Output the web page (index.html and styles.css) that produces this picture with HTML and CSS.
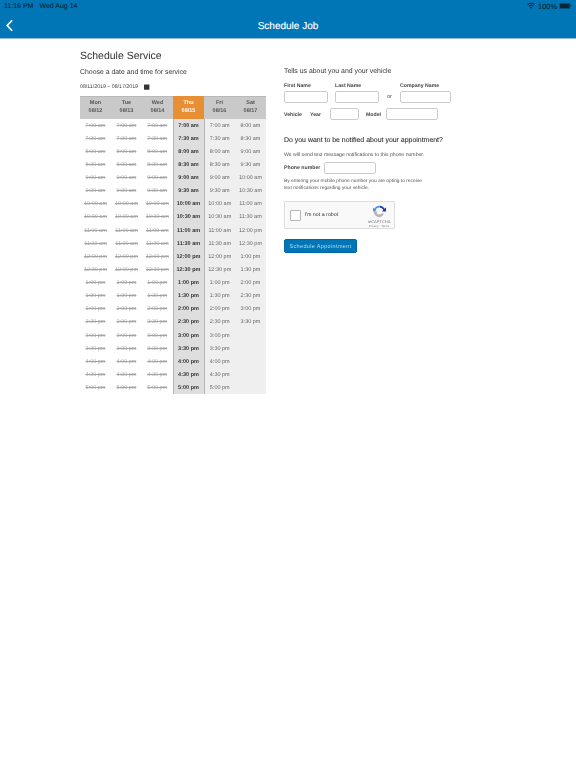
FILE: index.html
```html
<!DOCTYPE html>
<html lang="en">
<head>
<meta charset="utf-8">
<title>Schedule Job</title>
<link rel="stylesheet" href="styles.css">
</head>
<body>
<header class="topbar">
  <div class="status">
    <div class="status-left"><span>11:16 PM</span><span>Wed Aug 14</span></div>
    <div class="status-right">
      <svg class="wifi" viewBox="0 0 16 12" aria-hidden="true"><path d="M8 11.5 5.6 8.6a3.6 3.6 0 0 1 4.8 0ZM4.4 7.2 3 5.6a7.4 7.4 0 0 1 10 0l-1.4 1.6a5.4 5.4 0 0 0-7.2 0ZM1.9 4.2.5 2.6a11.2 11.2 0 0 1 15 0l-1.4 1.6a9.2 9.2 0 0 0-12.2 0Z"/></svg>
      <span>100%</span>
      <svg class="battery" viewBox="0 0 15 7" aria-hidden="true"><rect x=".3" y=".3" width="12.6" height="6.4" rx="1.4" fill="none" stroke="#16344a" stroke-width=".5"/><rect x="1" y="1" width="11.2" height="5" rx=".8"/><rect x="13.3" y="2.4" width=".8" height="2.2" rx=".4" fill="#16344a"/></svg>
    </div>
  </div>
  <div class="nav">
    <svg class="back" viewBox="0 0 8 14" aria-hidden="true"><path d="M7 1 1.4 7 7 13" fill="none" stroke="#fff" stroke-width="2"/></svg>
    <h1>Schedule Job</h1>
  </div>
</header>
<main class="page">
  <section class="col-left">
    <h2>Schedule Service</h2>
    <p class="lead">Choose a date and time for service</p>
    <div class="range"><span>08/11/2019 – 08/17/2019</span>
      <svg class="cal" viewBox="0 0 6 6" aria-hidden="true"><rect y=".5" width="5.4" height="5.2" rx=".4"/></svg>
    </div>
    <table class="sched">
      <thead><tr><th>Mon<br>08/12</th><th>Tue<br>08/13</th><th>Wed<br>08/14</th><th class="today">Thu<br>08/15</th><th>Fri<br>08/16</th><th>Sat<br>08/17</th></tr></thead>
      <tbody>
        <tr><td class="gone">7:00 am</td><td class="gone">7:00 am</td><td class="gone">7:00 am</td><td class="cur">7:00 am</td><td class="open">7:00 am</td><td class="open">8:00 am</td></tr>
        <tr><td class="gone">7:30 am</td><td class="gone">7:30 am</td><td class="gone">7:30 am</td><td class="cur">7:30 am</td><td class="open">7:30 am</td><td class="open">8:30 am</td></tr>
        <tr><td class="gone">8:00 am</td><td class="gone">8:00 am</td><td class="gone">8:00 am</td><td class="cur">8:00 am</td><td class="open">8:00 am</td><td class="open">9:00 am</td></tr>
        <tr><td class="gone">8:30 am</td><td class="gone">8:30 am</td><td class="gone">8:30 am</td><td class="cur">8:30 am</td><td class="open">8:30 am</td><td class="open">9:30 am</td></tr>
        <tr><td class="gone">9:00 am</td><td class="gone">9:00 am</td><td class="gone">9:00 am</td><td class="cur">9:00 am</td><td class="open">9:00 am</td><td class="open">10:00 am</td></tr>
        <tr><td class="gone">9:30 am</td><td class="gone">9:30 am</td><td class="gone">9:30 am</td><td class="cur">9:30 am</td><td class="open">9:30 am</td><td class="open">10:30 am</td></tr>
        <tr><td class="gone">10:00 am</td><td class="gone">10:00 am</td><td class="gone">10:00 am</td><td class="cur">10:00 am</td><td class="open">10:00 am</td><td class="open">11:00 am</td></tr>
        <tr><td class="gone">10:30 am</td><td class="gone">10:30 am</td><td class="gone">10:30 am</td><td class="cur">10:30 am</td><td class="open">10:30 am</td><td class="open">11:30 am</td></tr>
        <tr><td class="gone">11:00 am</td><td class="gone">11:00 am</td><td class="gone">11:00 am</td><td class="cur">11:00 am</td><td class="open">11:00 am</td><td class="open">12:00 pm</td></tr>
        <tr><td class="gone">11:30 am</td><td class="gone">11:30 am</td><td class="gone">11:30 am</td><td class="cur">11:30 am</td><td class="open">11:30 am</td><td class="open">12:30 pm</td></tr>
        <tr><td class="gone">12:00 pm</td><td class="gone">12:00 pm</td><td class="gone">12:00 pm</td><td class="cur">12:00 pm</td><td class="open">12:00 pm</td><td class="open">1:00 pm</td></tr>
        <tr><td class="gone">12:30 pm</td><td class="gone">12:30 pm</td><td class="gone">12:30 pm</td><td class="cur">12:30 pm</td><td class="open">12:30 pm</td><td class="open">1:30 pm</td></tr>
        <tr><td class="gone">1:00 pm</td><td class="gone">1:00 pm</td><td class="gone">1:00 pm</td><td class="cur">1:00 pm</td><td class="open">1:00 pm</td><td class="open">2:00 pm</td></tr>
        <tr><td class="gone">1:30 pm</td><td class="gone">1:30 pm</td><td class="gone">1:30 pm</td><td class="cur">1:30 pm</td><td class="open">1:30 pm</td><td class="open">2:30 pm</td></tr>
        <tr><td class="gone">2:00 pm</td><td class="gone">2:00 pm</td><td class="gone">2:00 pm</td><td class="cur">2:00 pm</td><td class="open">2:00 pm</td><td class="open">3:00 pm</td></tr>
        <tr><td class="gone">2:30 pm</td><td class="gone">2:30 pm</td><td class="gone">2:30 pm</td><td class="cur">2:30 pm</td><td class="open">2:30 pm</td><td class="open">3:30 pm</td></tr>
        <tr><td class="gone">3:00 pm</td><td class="gone">3:00 pm</td><td class="gone">3:00 pm</td><td class="cur">3:00 pm</td><td class="open">3:00 pm</td><td class="open"></td></tr>
        <tr><td class="gone">3:30 pm</td><td class="gone">3:30 pm</td><td class="gone">3:30 pm</td><td class="cur">3:30 pm</td><td class="open">3:30 pm</td><td class="open"></td></tr>
        <tr><td class="gone">4:00 pm</td><td class="gone">4:00 pm</td><td class="gone">4:00 pm</td><td class="cur">4:00 pm</td><td class="open">4:00 pm</td><td class="open"></td></tr>
        <tr><td class="gone">4:30 pm</td><td class="gone">4:30 pm</td><td class="gone">4:30 pm</td><td class="cur">4:30 pm</td><td class="open">4:30 pm</td><td class="open"></td></tr>
        <tr><td class="gone">5:00 pm</td><td class="gone">5:00 pm</td><td class="gone">5:00 pm</td><td class="cur">5:00 pm</td><td class="open">5:00 pm</td><td class="open"></td></tr>
      </tbody>
    </table>
  </section>
  <section class="col-right">
    <p class="lead">Tells us about you and your vehicle</p>
    <div class="name-row">
      <label class="field"><span class="lbl">First Name</span><input class="box w-name" type="text"></label>
      <label class="field"><span class="lbl">Last Name</span><input class="box w-name" type="text"></label>
      <span class="or">or</span>
      <label class="field"><span class="lbl">Company Name</span><input class="box w-company" type="text"></label>
    </div>
    <div class="vehicle-row">
      <span class="lbl vehicle-lbl">Vehicle</span>
      <span class="lbl year-lbl">Year</span>
      <input class="box w-year" type="text">
      <span class="lbl model-lbl">Model</span>
      <input class="box w-model" type="text">
    </div>
    <h3>Do you want to be notified about your appointment?</h3>
    <p class="small">We will send text message notifications to this phone number.</p>
    <div class="phone-row"><span class="lbl phone-lbl">Phone number</span><input class="box w-phone" type="text"></div>
    <p class="small consent">By entering your mobile phone number you are opting to receive<br>text notifications regarding your vehicle.</p>
    <div class="captcha">
      <span class="check"></span>
      <span class="robot">I'm not a robot</span>
      <div class="brand">
        <svg class="recap" viewBox="0 0 16 16" aria-hidden="true">
          <path d="M8 1a7 7 0 0 1 6.2 3.7L16 3v5h-5l1.8-1.8A5 5 0 0 0 8 3Z" fill="#1c3aa9"/>
          <path d="M8 1a7 7 0 0 0-6.2 3.7L0 3v5h3.2A5 5 0 0 1 8 3Z" fill="#4a90e2"/>
          <path d="M1 8h5L4.4 9.7A4.6 4.6 0 0 0 8 11.6a4.6 4.6 0 0 0 3.6-1.7l1.6 1.6A7 7 0 0 1 8 15a7 7 0 0 1-7-7Z" fill="#b5b5b5"/>
        </svg>
        <span class="brand-name">reCAPTCHA</span>
        <span class="brand-links">Privacy · Terms</span>
      </div>
    </div>
    <button class="submit" type="button">Schedule Appointment</button>
  </section>
</main>
</body>
</html>
```

FILE: styles.css
```css
* { box-sizing: border-box; }
html, body { margin: 0; padding: 0; background: #fff; }
body { font-family: "Liberation Sans", Arial, sans-serif; color: #333; width: 576px; height: 768px; overflow: hidden; text-rendering: geometricPrecision; }

.topbar { height: 39px; background: #0076b6; border-bottom: 1px solid #8fb9d6; color: #fff; }
.status { display: flex; justify-content: space-between; align-items: center; height: 12px; padding: 0 4px; font-size: 7px; color: #0c2436; -webkit-text-stroke: 0.1px #0c2436; }
.status-left { display: flex; gap: 6px; }
.status-right { display: flex; align-items: center; gap: 2px; font-size: 7.4px; }
.wifi { width: 8px; height: 6px; fill: #0c2436; margin-right: 1px; }
.battery { width: 13px; height: 6px; fill: #0c2436; }
.nav { position: relative; height: 26px; display: flex; justify-content: center; align-items: center; padding-top: 2px; }
.nav h1 { margin: 0; font-size: 10px; font-weight: 400; color: #fff; -webkit-text-stroke: 0.15px #fff; }
.back { position: absolute; left: 5.5px; top: 7px; width: 7px; height: 13px; }

.page { display: flex; gap: 18px; padding: 0 0 0 80px; will-change: transform; }
.col-left { width: 186px; }
.col-right { width: 200px; padding-top: 28px; }

h2 { margin: 11px 0 0; font-size: 10.5px; line-height: 13px; font-weight: 400; color: #333; }
.lead { margin: 0; font-size: 6.9px; line-height: 9px; color: #333; }
.col-left .lead { margin-top: 4.5px; }
.range { display: flex; align-items: center; gap: 6px; margin-top: 5.5px; height: 9px; font-size: 5.25px; color: #444; }
.cal { width: 6px; height: 6px; fill: #333; }

.sched { border-collapse: collapse; table-layout: fixed; width: 186px; margin-top: 5px; font-size: 5.5px; }
.sched th { width: 31px; height: 22px; padding: 0; background: #c9c9c9; border-top: 1px solid #b9b9b9; color: #555; font-weight: 700; line-height: 7.5px; text-align: center; }
.sched th.today { background: #e98f33; border-top-color: #e98f33; color: #fff; }
.sched td { height: 13.14px; padding: 1px 0 0; text-align: center; white-space: nowrap; }
.gone { color: #a5a5a5; text-decoration: line-through; }
.cur { background: #dedede; color: #333; font-weight: 700; border-left: 1px solid #b5b5b5; border-right: 1px solid #b5b5b5; }
.open { background: #efefef; color: #666; }

.name-row { display: flex; align-items: flex-end; margin-top: 6px; }
.field { display: flex; flex-direction: column; margin-right: 7px; }
.lbl { font-size: 5.2px; line-height: 8px; font-weight: 700; color: #444; }
.field .lbl { margin-bottom: 1px; }
.box { display: block; height: 12px; padding: 0; margin: 0; background: #fff; border: 1px solid #ccc; border-radius: 2px; }
.w-name { width: 44px; }
.w-company { width: 51px; }
.w-year { width: 29px; margin: 0 7px 0 auto; }
.w-model { width: 52px; margin-left: 5px; }
.w-phone { width: 52px; }
.or { font-size: 5.5px; line-height: 12px; color: #444; width: 13px; margin-left: 1px; }
.vehicle-row { display: flex; align-items: center; margin-top: 5px; width: 154px; }
.vehicle-lbl, .year-lbl, .model-lbl { padding-top: 1px; }
.vehicle-lbl { width: 26px; }
.year-lbl { width: 20px; }
.model-lbl { width: 15px; }

h3 { margin: 16px 0 0; font-size: 6.95px; line-height: 9px; font-weight: 400; color: #333; -webkit-text-stroke: 0.1px #333; white-space: nowrap; }
.small { margin: 0; font-size: 5.15px; line-height: 7px; color: #555; white-space: nowrap; }
h3 + .small { margin-top: 7px; }
.phone-row { display: flex; align-items: center; margin-top: 3px; }
.phone-lbl { width: 40px; }
.consent { margin-top: 4px; font-size: 4.85px; }

.captcha { position: relative; display: flex; align-items: center; width: 111px; height: 28px; margin-top: 9px; background: #f9f9f9; border: 1px solid #dcdcdc; border-radius: 1px; }
.check { width: 11px; height: 11px; margin-left: 5px; background: #fff; border: 1px solid #b5b5b5; border-radius: 1px; }
.robot { margin-left: 3.5px; font-size: 5.3px; color: #333; }
.brand { position: absolute; right: 3px; top: 3px; width: 24px; display: flex; flex-direction: column; align-items: center; }
.recap { width: 13px; height: 13px; }
.brand-name { margin-top: 1px; font-size: 4px; line-height: 5px; color: #777; }
.brand-links { font-size: 3px; line-height: 4px; color: #888; }

.submit { display: block; width: 73px; height: 14px; margin-top: 10px; padding: 0; background: #0076b6; border: 1px solid #0068a3; border-radius: 2px; color: #bcdcf0; font: 5.5px "Liberation Sans", Arial, sans-serif; letter-spacing: .35px; }
```
